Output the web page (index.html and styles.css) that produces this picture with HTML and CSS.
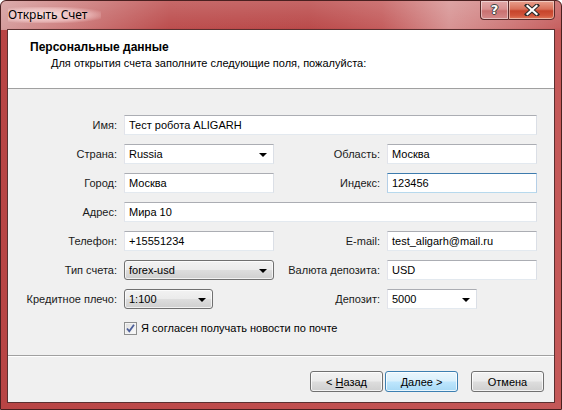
FILE: index.html
```html
<!DOCTYPE html>
<html lang="ru">
<head>
<meta charset="utf-8">
<title>Открыть Счет</title>
<link rel="stylesheet" href="styles.css">
</head>
<body>
<div class="window">
  <div class="titlebar">
    <span class="title">Открыть Счет</span>
    <div class="caption-btns">
      <div class="cap-btn help"><span>?</span></div>
      <div class="cap-btn close">
        <svg width="16" height="12" viewBox="0 0 16 12"><path d="M3 1.5 L13 10.5 M13 1.5 L3 10.5" stroke="#2b2b2b" stroke-width="4.2" stroke-linecap="square"/><path d="M3.5 2 L12.5 10 M12.5 2 L3.5 10" stroke="#ffffff" stroke-width="2.2" stroke-linecap="square"/></svg>
      </div>
    </div>
  </div>
  <div class="client">
    <div class="header">
      <div class="h-title">Персональные данные</div>
      <div class="h-sub">Для открытия счета заполните следующие поля, пожалуйста:</div>
    </div>
    <div class="form">
      <div class="row">
        <span class="lbl">Имя:</span>
        <div class="edit w-full">Тест робота ALIGARH</div>
      </div>
      <div class="row">
        <span class="lbl">Страна:</span>
        <div class="edit combo w-half">Russia<i class="arrow"></i></div>
        <span class="lbl r">Область:</span>
        <div class="edit w-half">Москва</div>
      </div>
      <div class="row">
        <span class="lbl">Город:</span>
        <div class="edit w-half">Москва</div>
        <span class="lbl r">Индекс:</span>
        <div class="edit w-half focus">123456</div>
      </div>
      <div class="row">
        <span class="lbl">Адрес:</span>
        <div class="edit w-full">Мира 10</div>
      </div>
      <div class="row">
        <span class="lbl">Телефон:</span>
        <div class="edit w-half">+15551234</div>
        <span class="lbl r">E-mail:</span>
        <div class="edit w-half">test_aligarh@mail.ru</div>
      </div>
      <div class="row">
        <span class="lbl">Тип счета:</span>
        <div class="btncombo w-half">forex-usd<i class="arrow"></i></div>
        <span class="lbl r">Валюта депозита:</span>
        <div class="edit w-half">USD</div>
      </div>
      <div class="row">
        <span class="lbl">Кредитное плечо:</span>
        <div class="btncombo w-small">1:100<i class="arrow"></i></div>
        <span class="lbl r spacer">Депозит:</span>
        <div class="edit combo w-dep">5000<i class="arrow"></i></div>
      </div>
      <div class="row check-row">
        <span class="lbl"></span>
        <span class="checkbox">
          <svg width="11" height="11" viewBox="0 0 11 11"><path d="M2 5.5 L4.3 8.3 L9 1.8" fill="none" stroke="#4b5e99" stroke-width="1.8"/></svg>
        </span>
        <span class="check-text">Я согласен получать новости по почте</span>
      </div>
    </div>
    <div class="footer">
      <button class="btn">&lt; <u>Н</u>азад</button>
      <button class="btn default"><u>Д</u>алее &gt;</button>
      <button class="btn cancel">Отмена</button>
    </div>
  </div>
</div>
</body>
</html>
```
FILE: styles.css
```css
* { box-sizing: border-box; }
html, body { margin: 0; padding: 0; }
body {
  width: 562px;
  height: 410px;
  overflow: hidden;
  font-family: "Liberation Sans", Arial, sans-serif;
  font-size: 11px;
  color: #000;
}
.window {
  width: 562px;
  height: 410px;
  border: 1px solid #4a2020;
  border-radius: 6px 6px 0 0;
  background:
    linear-gradient(180deg, rgba(255,255,255,0.18) 0px, rgba(255,255,255,0.04) 27px, rgba(255,255,255,0) 28px),
    linear-gradient(90deg, #d49a9a 0%, #cc7a7a 12%, #ba4848 30%, #b84444 55%, #c25757 68%, #d69090 80%, #cd7676 90%, #c45a5a 100%) top / 100% 29px no-repeat,
    linear-gradient(90deg, #b84444 0%, #c04e4e 50%, #c45858 100%);
  display: flex;
  flex-direction: column;
  padding: 0 6px 6px 6px;
}
.titlebar {
  height: 28px;
  display: flex;
  align-items: flex-start;
  justify-content: space-between;
  position: relative;
}
.title {
  margin-top: 6px;
  margin-left: 1px;
  font-family: "Noto Sans", "Liberation Sans", sans-serif;
  font-size: 12px;
  color: #000;
  padding: 0 14px 0 0;
  background: radial-gradient(ellipse at 40% 50%, rgba(255,235,235,0.85) 0%, rgba(255,225,225,0.5) 55%, rgba(255,220,220,0) 80%);
  line-height: 16px;
}
.caption-btns {
  display: flex;
  margin-top: -1px;
}
.cap-btn {
  height: 20px;
  border: 1px solid #5a2a2a;
  display: flex;
  align-items: center;
  justify-content: center;
  box-shadow: inset 0 0 0 1px rgba(255,255,255,0.45);
}
.help {
  width: 28px;
  border-radius: 0 0 0 4px;
  border-right: none;
  background: linear-gradient(180deg, #e2a9a9 0%, #d89090 45%, #c97070 55%, #d48a8a 100%);
}
.help span {
  font-family: "DejaVu Sans", sans-serif;
  font-weight: bold;
  font-size: 13px;
  color: #fff;
  text-shadow: 0 0 1px #333, 1px 0 0 #444, -1px 0 0 #444, 0 1px 0 #444, 0 -1px 0 #444;
  line-height: 14px;
}
.close {
  width: 47px;
  border-radius: 0 0 4px 0;
  background: linear-gradient(180deg, #e8a08e 0%, #d8705a 45%, #c7442b 55%, #d0543a 80%, #e07a5c 100%);
}
.client {
  flex: 1;
  border: 1px solid #5b3030;
  background: #f0f0f0;
  display: flex;
  flex-direction: column;
}
.header {
  height: 59px;
  background: #fff;
  border-bottom: 1px solid #a0a0a0;
  padding: 10px 0 0 22px;
}
.h-title {
  font-weight: bold;
  font-size: 12px;
  line-height: 15px;
}
.h-sub {
  margin-left: 21px;
  line-height: 15px;
  margin-top: 1px;
}
.form {
  height: 267px;
  border-bottom: 1px solid #a0a0a0;
  padding-top: 26px;
  display: flex;
  flex-direction: column;
  gap: 9px;
}
.row {
  display: flex;
  align-items: center;
  height: 20px;
}
.lbl {
  width: 109px;
  margin-right: 7px;
  text-align: right;
  color: #1a1a1a;
  white-space: nowrap;
}
.lbl.r { width: 106px; }
.lbl.spacer { width: 167px; }
.edit {
  height: 20px;
  background: #fff;
  border: 1px solid #e3e9ef;
  border-top-color: #abadb3;
  border-left-color: #e2e3ea;
  border-right-color: #dbdfe6;
  padding: 0 0 0 4px;
  line-height: 18px;
  position: relative;
  white-space: nowrap;
}
.edit.focus {
  border-color: #569de5;
  border-top-color: #3d7bad;
  border-left-color: #b5cfe7;
  border-right-color: #b5cfe7;
  border-bottom-color: #b7d9ed;
}
.w-full { width: 413px; }
.w-half { width: 150px; }
.w-small { width: 89px; }
.w-dep { width: 90px; }
.arrow {
  position: absolute;
  right: 6px;
  top: 8px;
  width: 0;
  height: 0;
  border-left: 4px solid transparent;
  border-right: 4px solid transparent;
  border-top: 4px solid #000;
}
.btncombo {
  height: 20px;
  border: 1px solid #707070;
  border-radius: 3px;
  background: linear-gradient(180deg, #f2f2f2 0%, #ebebeb 48%, #dddddd 52%, #cfcfcf 100%);
  box-shadow: inset 0 0 0 1px rgba(255,255,255,0.7);
  padding-left: 4px;
  line-height: 18px;
  position: relative;
}
.check-row { height: 20px; }
.checkbox {
  width: 13px;
  height: 13px;
  border: 1px solid #8e8f8f;
  background: linear-gradient(135deg, #dcdcdc 0%, #fdfdfd 100%);
  box-shadow: inset 0 0 0 1px #f4f4f4;
  display: flex;
  align-items: center;
  justify-content: center;
  margin-right: 4px;
}
.check-text { color: #000; }
.footer {
  flex: 1;
  border-top: 1px solid #fff;
  display: flex;
  justify-content: flex-end;
  align-items: flex-start;
  padding: 14px 10px 0 0;
}
.btn {
  width: 73px;
  height: 21px;
  margin: 0;
  padding: 0;
  border: 1px solid #707070;
  border-radius: 3px;
  background: linear-gradient(180deg, #f2f2f2 0%, #ebebeb 48%, #dddddd 52%, #cfcfcf 100%);
  box-shadow: inset 0 0 0 1px rgba(255,255,255,0.75);
  font-family: "Liberation Sans", Arial, sans-serif;
  font-size: 11px;
  color: #000;
}
.btn + .btn { margin-left: 2px; }
.btn.default {
  border-color: #3c7fb1;
  background: linear-gradient(180deg, #eaf6fd 0%, #d9f0fc 48%, #bee6fd 52%, #a7d9f5 100%);
}
.btn.cancel { margin-left: 13px; }
```
